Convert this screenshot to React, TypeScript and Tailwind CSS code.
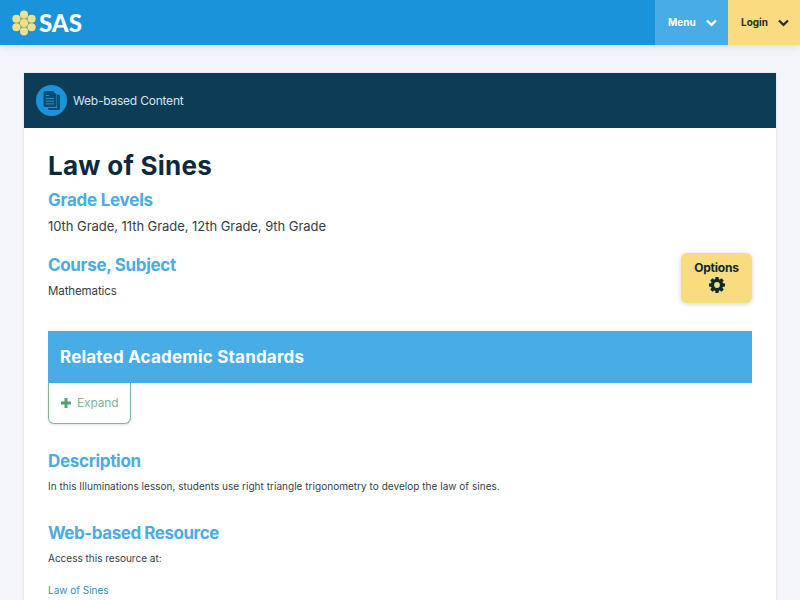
const LOGO_DOTS = [
  [12, 4.4],
  [4.3, 8.7],
  [19.7, 8.7],
  [12, 13],
  [4.3, 17.3],
  [19.7, 17.3],
  [12, 21.6],
];

const GEAR_TEETH = [0, 45, 90, 135, 180, 225, 270, 315];

function Logo() {
  return (
    <a className="ml-3 flex items-center" href="#">
      <svg className="h-[26px] w-6" viewBox="0 0 24 26">
        <path d="M12 3 20 8v10l-8 5-8-5V8z" fill="#6fae83" />
        {LOGO_DOTS.map(([cx, cy]) => (
          <circle key={`${cx}-${cy}`} cx={cx} cy={cy} r="4" fill="#f2df8c" />
        ))}
      </svg>
      <span className="ml-[3px] font-['Lato',sans-serif] text-[24px] leading-[26px] font-black text-white">SAS</span>
    </a>
  );
}

function ContentIcon() {
  return (
    <svg className="size-[31px]" viewBox="0 0 31 31">
      <circle cx="15.5" cy="15.5" r="15.5" fill="#1b93da" />
      <path d="M21 9.500h1.500q1.500 0 1.500 1.500v12.500q0 1.500-1.500 1.500H13.500q-1.500 0-1.500-1.500V23h9z" fill="#0d4a72" />
      <path d="M9 6h8l3.500 3.500V20.500q0 1.500-1.500 1.500H9q-1.500 0-1.500-1.500v-13Q7.500 6 9 6z" fill="#0d4a72" />
      <path d="M10 10.500h3M10 13.500h8M10 16.200h8M10 18.900h8" stroke="#1b93da" strokeWidth="1" />
    </svg>
  );
}

function Chevron() {
  return (
    <svg className="h-[8px] w-[11px]" viewBox="0 0 11 8" fill="none" stroke="currentColor" strokeWidth="2.3">
      <path d="m1 1.500 4.500 4.300L10 1.500" />
    </svg>
  );
}

function Gear() {
  return (
    <svg className="mt-px size-4" viewBox="-8 -8 16 16" fill="currentColor">
      {GEAR_TEETH.map((angle) => (
        <path key={angle} d="M-2-5 -1.500-8h3L2-5z" transform={`rotate(${angle})`} />
      ))}
      <circle r="4.500" fill="none" stroke="currentColor" strokeWidth="3.200" />
    </svg>
  );
}

function SectionTitle({ children, className = '' }: { children: string; className?: string }) {
  return <h2 className={`text-[17px] leading-6 font-bold text-[#4aace2] ${className}`}>{children}</h2>;
}

export default function App() {
  return (
    <div className="h-[600px] overflow-hidden bg-[#f4f5f9] font-['Inter',sans-serif] text-[#343f47]">
      <header className="relative flex h-[45px] justify-between bg-[#1b93da] shadow-[0_1px_8px_rgba(0,0,0,0.12)]">
        <Logo />
        <nav className="flex text-[10px] font-bold">
          <button className="flex w-[73px] items-center justify-between bg-[#48ade6] pr-[11px] pl-[13px] text-white">
            Menu
            <Chevron />
          </button>
          <button className="flex w-[72px] items-center justify-between bg-[#f8dc7f] pr-[11px] pl-[13px] text-[#2a3020]">
            Login
            <Chevron />
          </button>
        </nav>
      </header>

      <main className="mx-6 mt-7 h-[560px] bg-white shadow-[0_0_2px_rgba(0,0,0,0.12)]">
        <div className="flex h-[55px] items-center gap-[6px] bg-[#0d3c56] pl-3 text-[12px] tracking-[-0.22px] text-[#d6e4ec]">
          <ContentIcon />
          <span>Web-based Content</span>
        </div>

        <div className="px-6 pt-5">
          <h1 className="text-[26px] leading-9 font-bold tracking-[0.28px] text-[#0b2a3b]">Law of Sines</h1>
          <SectionTitle className="mt-1 tracking-[-0.25px]">Grade Levels</SectionTitle>
          <p className="mt-1 text-[13px] leading-5 tracking-[-0.05px]">10th Grade, 11th Grade, 12th Grade, 9th Grade</p>

          <div className="mt-[17px] flex justify-between">
            <div>
              <SectionTitle className="tracking-[-0.33px]">Course, Subject</SectionTitle>
              <p className="mt-1 text-[11.5px] leading-5 tracking-[-0.1px]">Mathematics</p>
            </div>
            <button className="flex h-[50px] w-[71px] flex-col items-center rounded-[6px] bg-[#f8dc7f] pt-[7px] text-[12px] leading-4 font-bold tracking-[-0.2px] text-[#0b2a2c] shadow-[0_1px_5px_rgba(0,0,0,0.18)]">
              Options
              <Gear />
            </button>
          </div>

          <div className="mt-7 flex h-[52px] items-center bg-[#48ade6] pt-px pl-3 text-[17px] font-bold tracking-[0.2px] text-white">
            Related Academic Standards
          </div>
          <button className="flex h-[41px] w-[83px] items-center gap-[6px] rounded-b-[6px] border border-t-0 border-[#87b59c] pl-3 text-[12px] tracking-[-0.15px] text-[#84b499] shadow-[0_1px_3px_rgba(0,0,0,0.12)]">
            <svg className="size-[10px]" viewBox="0 0 10 10" stroke="#4da373" strokeWidth="3">
              <path d="M5 0v10M0 5h10" />
            </svg>
            Expand
          </button>

          <SectionTitle className="mt-[25px] tracking-[-0.3px]">Description</SectionTitle>
          <p className="mt-[3px] text-[10px] leading-5 tracking-[0.03px]">
            In this Illuminations lesson, students use right triangle trigonometry to develop the law of sines.
          </p>

          <SectionTitle className="mt-[25px] tracking-[-0.45px]">Web-based Resource</SectionTitle>
          <p className="mt-[3px] text-[10px] leading-5">Access this resource at:</p>
          <a className="mt-3 block text-[10px] leading-5 text-[#378fae]" href="#">
            Law of Sines
          </a>
        </div>
      </main>
    </div>
  );
}
